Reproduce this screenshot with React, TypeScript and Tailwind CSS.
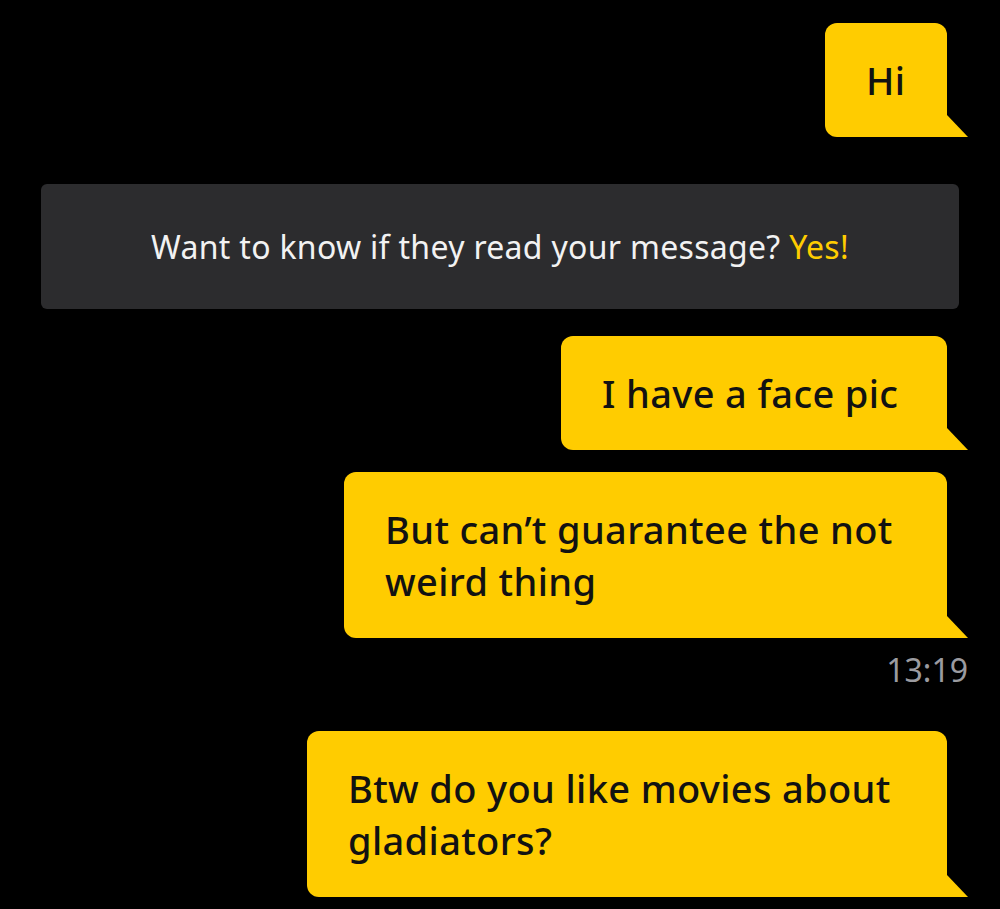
import React from "react";

function Bubble({ width, children }: { width: string; children: React.ReactNode }) {
  return (
    <div className={`relative ${width} rounded-[12px] rounded-br-none bg-[#ffcc00] py-[31px] pl-[41px] pr-[16px] text-[38px] font-medium leading-[52px] tracking-[0.35px] text-[#121212]`}>
      {children}
      <svg className="absolute bottom-0 left-full" width="21" height="22" viewBox="0 0 21 22">
        <polygon points="0,0 21,22 0,22" fill="#ffcc00" />
      </svg>
    </div>
  );
}

export default function App() {
  return (
    <div
      className="min-h-[909px] w-full overflow-hidden bg-black pt-[23px]"
      style={{ fontFamily: '"Noto Sans", "Open Sans", sans-serif' }}
    >
      <div className="flex flex-col items-end pr-[53px]">
        <Bubble width="w-[122px]">Hi</Bubble>
      </div>
      <div className="mx-[41px] mt-[47px] flex h-[125px] items-center justify-center rounded-[6px] bg-[#2c2c2e] text-[32px] tracking-[0.3px] text-[#f2f2f2]">
        <span>
          Want to know if they read your message? <span className="text-[#ffcc00]">Yes!</span>
        </span>
      </div>
      <div className="mt-[27px] flex flex-col items-end pr-[53px]">
        <Bubble width="w-[386px]">I have a face pic</Bubble>
        <div className="mt-[22px]">
          <Bubble width="w-[603px]">
            But can’t guarantee the not
            <br />
            weird thing
          </Bubble>
        </div>
      </div>
      <div className="flex justify-end pr-[32px] pt-[14px] text-[32px] leading-[36px] text-[#9b9ba0]">13:19</div>
      <div className="mt-[43px] flex flex-col items-end pr-[53px]">
        <Bubble width="w-[640px]">
          Btw do you like movies about
          <br />
          gladiators?
        </Bubble>
      </div>
    </div>
  );
}
